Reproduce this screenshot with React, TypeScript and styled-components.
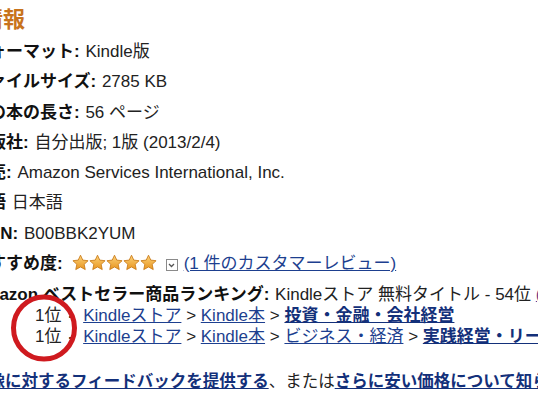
import React from 'react';
import styled, { createGlobalStyle } from 'styled-components';

const GlobalStyle = createGlobalStyle`
  html, body {
    margin: 0;
    padding: 0;
    background: #ffffff;
    overflow: hidden;
  }
  body {
    font-family: "Liberation Sans", "Noto Sans CJK JP", sans-serif;
    color: #222222;
  }
`;

const details = [
  { label: 'フォーマット:', value: 'Kindle版' },
  { label: 'ファイルサイズ:', value: '2785 KB' },
  { label: '紙の本の長さ:', value: '56 ページ' },
  { label: '出版社:', value: '自分出版; 1版 (2013/2/4)' },
  { label: '販売:', value: 'Amazon Services International, Inc.' },
  { label: '言語', value: '日本語' },
  { label: 'ASIN:', value: 'B00BBK2YUM' },
];

const ranks = [
  { category: '投資・金融・会社経営', middle: [] as string[] },
  { category: '実践経営・リーダーシップ', middle: ['ビジネス・経済'] },
];

const StarIcon: React.FC = () => (
  <svg width="17" height="17" viewBox="0 0 24 23">
    <defs>
      <linearGradient id="starFill" x1="0" y1="0" x2="0" y2="1">
        <stop offset="0" stopColor="#fcd27a" />
        <stop offset="1" stopColor="#e8951f" />
      </linearGradient>
    </defs>
    <path
      d="M12 1.2l3.2 6.9 7.5.9-5.5 5.1 1.5 7.4L12 17.8l-6.7 3.7 1.5-7.4L1.3 9l7.5-.9z"
      fill="url(#starFill)"
      stroke="#c97a16"
      strokeWidth="1.2"
      strokeLinejoin="round"
    />
  </svg>
);

export default function App() {
  return (
    <>
      <GlobalStyle />
      <Page>
        <Heading>登録情報</Heading>
        <DetailList>
          {details.map((d) => (
            <DetailItem key={d.label}>
              <Label>{d.label}</Label> {d.value}
            </DetailItem>
          ))}
          <DetailItem>
            <Label>おすすめ度:</Label>
            <Stars>
              {[0, 1, 2, 3, 4].map((i) => (
                <StarIcon key={i} />
              ))}
            </Stars>
            <DropBox>
              <svg width="9" height="9" viewBox="0 0 9 9">
                <path d="M2 3l2.5 2.5L7 3" fill="none" stroke="#555" strokeWidth="1.3" />
              </svg>
            </DropBox>
            <Link href="#">(1 件のカスタマーレビュー)</Link>
          </DetailItem>
          <RankItem>
            <RankHead>
              <Label>Amazon ベストセラー商品ランキング:</Label> Kindleストア 無料タイトル - 54位{' '}
              <VisitedLink href="#">(Kindleストア 無料タイトルの売れ筋ランキングを見る)</VisitedLink>
            </RankHead>
            <RankList>
              {ranks.map((r) => (
                <RankRow key={r.category}>
                  1位<Dash>-</Dash>
                  <Link href="#">Kindleストア</Link> &gt; <Link href="#">Kindle本</Link>
                  {r.middle.map((m) => (
                    <React.Fragment key={m}>
                      {' '}
                      &gt; <Link href="#">{m}</Link>
                    </React.Fragment>
                  ))}{' '}
                  &gt; <Link href="#" $bold>{r.category}</Link>
                </RankRow>
              ))}
            </RankList>
          </RankItem>
        </DetailList>
        <Feedback>
          <Link href="#" $bold>画像に対するフィードバックを提供する</Link>、または
          <Link href="#" $bold>さらに安い価格について知らせる</Link>
        </Feedback>
        <Annotation width="72" height="72" viewBox="0 0 72 72">
          <ellipse cx="36" cy="36" rx="30.5" ry="31" fill="none" stroke="#cf1a1f" strokeWidth="5" />
        </Annotation>
      </Page>
    </>
  );
}

const Page = styled.div`
  position: relative;
  margin-left: -63px;
  width: 700px;
  font-size: 17px;
  white-space: nowrap;
`;

const Heading = styled.h2`
  margin: 6px 0 0;
  font-size: 22px;
  line-height: 28px;
  font-weight: bold;
  color: #c8731c;
`;

const DetailList = styled.ul`
  list-style: none;
  margin: 3px 0 0;
  padding: 0 0 0 35px;
`;

const DetailItem = styled.li`
  display: block;
  line-height: 30.25px;
  height: 30.25px;
`;

const RankItem = styled.li`
  display: block;
`;

const Label = styled.b`
  font-weight: bold;
  color: #111111;
  margin-right: 1px;
`;

const Stars = styled.span`
  display: inline-flex;
  vertical-align: -2px;
  margin: 0 9px 0 8px;
`;

const DropBox = styled.span`
  display: inline-flex;
  align-items: center;
  justify-content: center;
  vertical-align: -1px;
  width: 10px;
  height: 10px;
  border: 1px solid #8a8a8a;
  margin-right: 6px;
`;

const Link = styled.a<{ $bold?: boolean }>`
  color: ${(p) => (p.$bold ? '#13307a' : '#1d3f8f')};
  font-weight: ${(p) => (p.$bold ? 'bold' : 'normal')};
  text-decoration: underline;
`;

const VisitedLink = styled.a`
  color: #6b3a8c;
  text-decoration: underline;
`;

const RankHead = styled.div`
  line-height: 21px;
  padding-top: 5px;
`;

const RankList = styled.ul`
  list-style: none;
  margin: 0;
  padding: 0 0 0 63px;
`;

const RankRow = styled.li`
  line-height: 21px;
`;

const Dash = styled.span`
  display: inline-block;
  margin: 0 9px 0 7px;
  font-weight: bold;
`;

const Feedback = styled.p`
  margin: 24px 0 0 35px;
  font-size: 16.5px;
  line-height: 21px;
`;

const Annotation = styled.svg`
  position: absolute;
  left: 71px;
  top: 286px;
  pointer-events: none;
`;
